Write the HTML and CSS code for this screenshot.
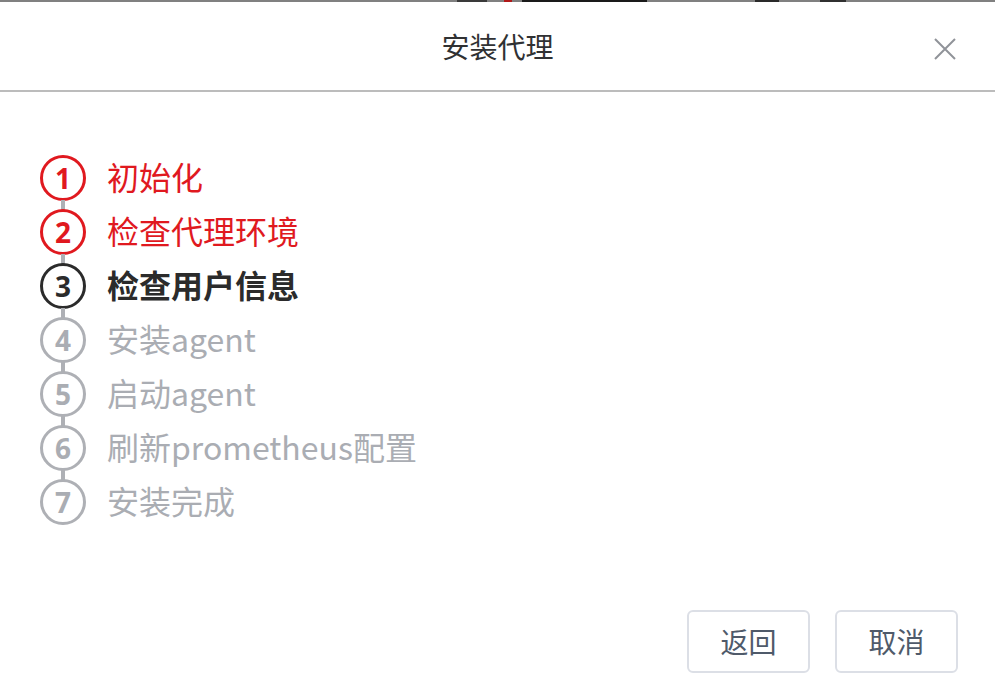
FILE: index.html
```html
<!DOCTYPE html>
<html lang="zh-CN">
<head>
<meta charset="utf-8">
<title>安装代理</title>
<link rel="stylesheet" href="styles.css">
</head>
<body>
<div class="backdrop">
  <span class="bd-seg bd-a"></span>
  <span class="bd-seg bd-b"></span>
  <span class="bd-seg bd-c"></span>
  <span class="bd-seg bd-d"></span>
  <span class="bd-seg bd-e"></span>
</div>
<div class="modal">
  <header class="modal-header">
    <h1 class="modal-title">安装代理</h1>
    <button class="close-btn" aria-label="关闭">
      <svg width="22" height="22" viewBox="0 0 22 22"><path d="M1 1 L21 21 M21 1 L1 21" stroke="#909399" stroke-width="2" fill="none"/></svg>
    </button>
  </header>
  <ol class="steps">
    <li class="step done"><span class="num">1</span><span class="label">初始化</span></li>
    <li class="step done"><span class="num">2</span><span class="label">检查代理环境</span></li>
    <li class="step active"><span class="num">3</span><span class="label">检查用户信息</span></li>
    <li class="step"><span class="num">4</span><span class="label">安装agent</span></li>
    <li class="step"><span class="num">5</span><span class="label">启动agent</span></li>
    <li class="step"><span class="num">6</span><span class="label">刷新prometheus配置</span></li>
    <li class="step last"><span class="num">7</span><span class="label">安装完成</span></li>
  </ol>
  <footer class="modal-footer">
    <button class="btn">返回</button>
    <button class="btn">取消</button>
  </footer>
</div>
</body>
</html>
```
FILE: styles.css
```css
* { box-sizing: border-box; }
html, body { margin: 0; padding: 0; }
body {
  width: 995px;
  height: 692px;
  background: #ffffff;
  font-family: "Noto Sans CJK SC", "Noto Sans", sans-serif;
  display: flex;
  flex-direction: column;
  overflow: hidden;
}
.backdrop {
  height: 2px;
  background: #808080;
  position: relative;
  flex: none;
}
.bd-seg { position: absolute; top: 0; height: 2px; }
.bd-a { left: 457px; width: 30px; background: #3a3a3a; }
.bd-b { left: 504px; width: 8px; background: #b01818; }
.bd-c { left: 522px; width: 125px; background: #1a1a1a; }
.bd-d { left: 755px; width: 24px; background: #2a2a2a; }
.bd-e { left: 820px; width: 26px; background: #303030; }

.modal {
  flex: 1;
  display: flex;
  flex-direction: column;
  background: #fff;
  border-radius: 3px 3px 0 0;
}
.modal-header {
  height: 90px;
  border-bottom: 2px solid #bcbcbc;
  display: flex;
  align-items: center;
  justify-content: center;
  position: relative;
  padding-bottom: 1px;
}
.modal-title {
  margin: 0;
  font-size: 28px;
  font-weight: 400;
  color: #303133;
  line-height: 1;
}
.close-btn {
  position: absolute;
  right: 39px;
  top: 36px;
  width: 22px;
  height: 22px;
  padding: 0;
  border: 0;
  background: none;
  display: flex;
}
.steps {
  list-style: none;
  margin: 0;
  padding: 59px 0 0 40px;
  display: flex;
  flex-direction: column;
}
.step {
  height: 54px;
  display: flex;
  align-items: center;
  position: relative;
  color: #aaadb3;
}
.step::after {
  content: "";
  position: absolute;
  left: 21px;
  top: 49px;
  width: 4px;
  height: 10px;
  background: #aeb0b5;
}
.step.last::after { display: none; }
.num {
  width: 46px;
  height: 46px;
  border: 3px solid #aeb0b5;
  border-radius: 50%;
  display: flex;
  align-items: center;
  justify-content: center;
  font-family: "Open Sans", "Noto Sans", sans-serif;
  font-weight: 700;
  font-size: 28px;
  line-height: 1;
  color: #aaadb3;
  flex: none;
}
.label {
  margin-left: 21px;
  font-size: 32px;
  line-height: 1;
  padding-bottom: 5px;
}
.step.done { color: #e0191f; }
.step.done .num { border-color: #e0191f; color: #e0191f; }
.step.active { color: #2b2b2b; font-weight: 700; }
.step.active .label { font-weight: 700; }
.step.active .num { border-color: #2b2b2b; color: #2b2b2b; }

.modal-footer {
  margin-top: auto;
  display: flex;
  justify-content: flex-end;
  gap: 25px;
  padding: 0 37px 19px 0;
}
.btn {
  width: 123px;
  height: 63px;
  border: 2px solid #dcdfe6;
  border-radius: 6px;
  background: #fff;
  font-family: "Noto Sans CJK SC", "Noto Sans", sans-serif;
  font-size: 28px;
  color: #4f5a6a;
  padding: 0 0 2px;
}
```
